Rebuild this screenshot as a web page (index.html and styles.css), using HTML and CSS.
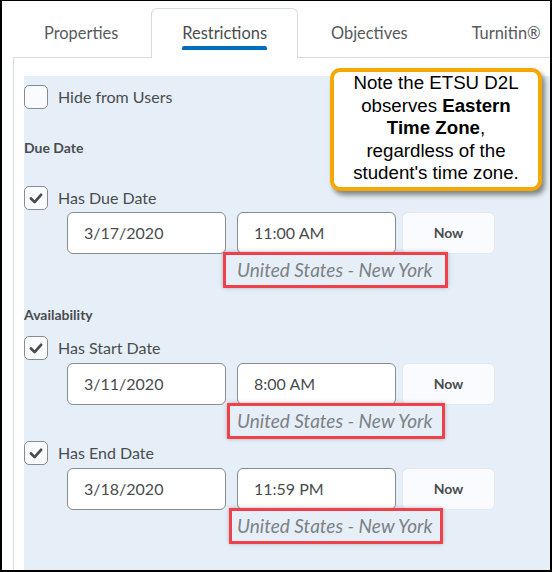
FILE: index.html
```html
<!DOCTYPE html>
<html lang="en">
<head>
<meta charset="utf-8">
<title>Restrictions</title>
<link rel="stylesheet" href="styles.css">
</head>
<body>
<div class="frame">
  <div class="tabs">
    <div class="tab"><span class="tab-label">Properties</span></div>
    <div class="tab active"><span class="tab-label">Restrictions</span><span class="tab-bar"></span></div>
    <div class="tab"><span class="tab-label">Objectives</span></div>
    <div class="tab"><span class="tab-label">Turnitin®</span></div>
  </div>
  <div class="panel">
    <div class="area">
      <label class="check-row hide-row">
        <span class="box"></span>
        <span class="check-text">Hide from Users</span>
      </label>

      <div class="heading due-heading">Due Date</div>
      <label class="check-row due-check">
        <span class="box"><svg viewBox="0 0 24 24" width="24" height="24"><path d="M6.5 12.5 L10.5 16.5 L17.5 8.5" fill="none" stroke="#494c4e" stroke-width="3" stroke-linecap="round" stroke-linejoin="round"/></svg></span>
        <span class="check-text">Has Due Date</span>
      </label>
      <div class="inputs">
        <div class="field date">3/17/2020</div>
        <div class="field time">11:00 AM</div>
        <div class="now">Now</div>
      </div>
      <div class="tz-row"><span class="tz">United States - New York</span></div>

      <div class="heading avail-heading">Availability</div>
      <label class="check-row start-check">
        <span class="box"><svg viewBox="0 0 24 24" width="24" height="24"><path d="M6.5 12.5 L10.5 16.5 L17.5 8.5" fill="none" stroke="#494c4e" stroke-width="3" stroke-linecap="round" stroke-linejoin="round"/></svg></span>
        <span class="check-text">Has Start Date</span>
      </label>
      <div class="inputs">
        <div class="field date">3/11/2020</div>
        <div class="field time">8:00 AM</div>
        <div class="now">Now</div>
      </div>
      <div class="tz-row"><span class="tz tz-b">United States - New York</span></div>

      <label class="check-row end-check">
        <span class="box"><svg viewBox="0 0 24 24" width="24" height="24"><path d="M6.5 12.5 L10.5 16.5 L17.5 8.5" fill="none" stroke="#494c4e" stroke-width="3" stroke-linecap="round" stroke-linejoin="round"/></svg></span>
        <span class="check-text">Has End Date</span>
      </label>
      <div class="inputs">
        <div class="field date">3/18/2020</div>
        <div class="field time">11:59 PM</div>
        <div class="now">Now</div>
      </div>
      <div class="tz-row"><span class="tz tz-c">United States - New York</span></div>
    </div>
  </div>

  <div class="callout">Note the ETSU D2L<br>observes <b>Eastern</b><br><b>Time Zone</b>,<br>regardless of the<br>student's time zone.</div>
</div>
</body>
</html>
```

FILE: styles.css
```css
* { box-sizing: border-box; }
html, body { margin: 0; padding: 0; background: #fff; }
body { font-family: Lato, "Open Sans", sans-serif; color: #494c4e; }

.frame {
  position: relative;
  width: 552px;
  height: 572px;
  border-style: solid;
  border-color: #000;
  border-width: 1px 2px 2px 2px;
  display: flex;
  flex-direction: column;
  overflow: hidden;
  background: #fff;
}

.tabs {
  display: flex;
  gap: 2px;
  margin-top: 7px;
  padding-left: 11px;
  margin-bottom: -1px;
  position: relative;
  z-index: 1;
}
.tab {
  height: 49px;
  padding: 14px 30px 0;
  border: 1px solid transparent;
  border-bottom: none;
  display: flex;
  flex-direction: column;
  align-items: center;
  font-size: 16.4px;
  color: #565a5c;
}
.tab-label { line-height: 20px; white-space: nowrap; }
.tab.active {
  background: #fff;
  border-color: #d6dbe2;
  border-radius: 6px 6px 0 0;
  color: #494c4e;
  height: 50px;
}
.tab-bar {
  display: block;
  width: 100%;
  height: 4px;
  margin-top: 3px;
  background: #006fbf;
  border-radius: 2px 2px 0 0;
}

.panel {
  flex: 1;
  margin-left: 11px;
  border-top: 1px solid #d6dbe2;
  border-left: 1px solid #d6dbe2;
  padding: 18px 0 0 10px;
  display: flex;
  flex-direction: column;
}
.area {
  flex: 1;
  background: #e6eff7;
  padding-top: 9px;
}

.check-row {
  display: flex;
  align-items: center;
  gap: 10px;
  height: 24px;
}
.box {
  width: 24px;
  height: 24px;
  border: 1px solid #868c8f;
  border-radius: 5px;
  background: #f9fbff;
  display: flex;
  align-items: center;
  justify-content: center;
}
.box svg { display: block; width: 22px; height: 22px; }
.check-text { font-size: 16px; line-height: 20px; color: #494c4e; }

.heading {
  font-size: 14px;
  font-weight: 700;
  line-height: 18px;
  color: #494c4e;
}
.due-heading { margin-top: 30px; }
.due-check { margin-top: 29px; }
.avail-heading { margin-top: 18px; }
.start-check { margin-top: 12px; }
.end-check { margin-top: 2px; }

.inputs {
  display: flex;
  margin-top: 2px;
  margin-left: 43px;
}
.start-check + .inputs, .end-check + .inputs { margin-top: 3px; }
.field {
  width: 159px;
  height: 42px;
  border: 1px solid #868c8f;
  border-radius: 6px;
  background: #fff;
  font-size: 16px;
  line-height: 40px;
  padding-left: 16px;
  color: #494c4e;
}
.field.time { margin-left: 11px; }
.now {
  width: 93px;
  height: 42px;
  margin-left: 6px;
  border: 1px solid #e3e9f1;
  border-radius: 6px;
  background: #f9fbff;
  font-size: 14px;
  font-weight: 700;
  line-height: 40px;
  text-align: center;
  color: #494c4e;
}

.tz-row {
  margin-top: -2px;
  padding-left: 199px;
  position: relative;
}
.tz {
  display: inline-block;
  border: 3px solid #f0414a;
  padding: 3px 12px 3px 11px;
  font-size: 19px;
  line-height: 24px;
  font-style: italic;
  color: #7c8186;
  box-shadow: 0 0 4px rgba(0, 0, 0, 0.25);
  white-space: nowrap;
}
.tz-b { margin-left: 4px; padding-left: 7px; padding-right: 9px; }
.tz-c { margin-left: 6px; padding-left: 5px; padding-right: 7px; }

.callout {
  position: absolute;
  left: 328px;
  top: 67px;
  width: 212px;
  padding: 0 2px 2px;
  border: 4px solid #f5a800;
  border-radius: 10px;
  background: #fff;
  box-shadow: 3px 4px 5px rgba(0, 0, 0, 0.45);
  font-family: "Liberation Sans", Arial, sans-serif;
  font-size: 18.7px;
  line-height: 22.5px;
  text-align: center;
  color: #000;
  z-index: 2;
}
.callout b { font-weight: 700; }
```
